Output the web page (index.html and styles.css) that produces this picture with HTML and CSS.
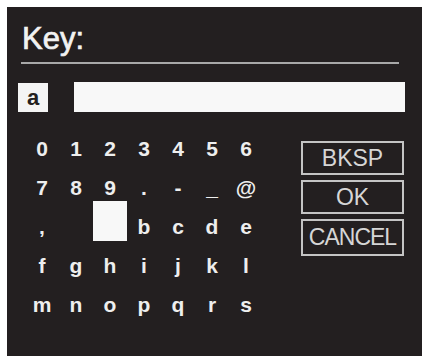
FILE: index.html
```html
<!DOCTYPE html>
<html>
<head>
<meta charset="utf-8">
<link rel="stylesheet" href="styles.css">
</head>
<body>
<div class="panel">
  <div class="title">Key:</div>
  <div class="rule"></div>
  <div class="entry">
    <div class="current">a</div>
    <div class="field"></div>
  </div>
  <div class="keyboard">
    <div class="keys">
      <span>0</span><span>1</span><span>2</span><span>3</span><span>4</span><span>5</span><span>6</span>
      <span>7</span><span>8</span><span>9</span><span>.</span><span>-</span><span>_</span><span>@</span>
      <span>,</span><span></span><span class="sel"></span><span>b</span><span>c</span><span>d</span><span>e</span>
      <span>f</span><span>g</span><span>h</span><span>i</span><span>j</span><span>k</span><span>l</span>
      <span>m</span><span>n</span><span>o</span><span>p</span><span>q</span><span>r</span><span>s</span>
    </div>
    <div class="buttons">
      <div class="btn">BKSP</div>
      <div class="btn">OK</div>
      <div class="btn cancel">CANCEL</div>
    </div>
  </div>
</div>
</body>
</html>
```
FILE: styles.css
```css
html, body {
  margin: 0;
  padding: 0;
  background: #ffffff;
  width: 426px;
  height: 356px;
  overflow: hidden;
}
.panel {
  margin: 7px 0 0 7px;
  width: 415px;
  height: 349px;
  background: #231f20;
  font-family: "Liberation Sans", Arial, sans-serif;
  box-sizing: border-box;
  padding-top: 14px;
}
.title {
  margin-left: 15px;
  font-size: 31px;
  line-height: 36px;
  height: 36px;
  color: #f2f2f2;
  -webkit-text-stroke: 0.7px #f2f2f2;
}
.rule {
  margin: 5px 0 0 14px;
  width: 378px;
  height: 2px;
  background: #a8a8a8;
}
.entry {
  display: flex;
  align-items: flex-start;
  margin: 18px 0 0 11px;
}
.current {
  margin-top: 1px;
  width: 30px;
  height: 29px;
  background: #f4f4f4;
  color: #231f20;
  font-weight: bold;
  font-size: 22px;
  line-height: 29px;
  text-align: center;
}
.field {
  margin-left: 26px;
  width: 331px;
  height: 30px;
  background: #f8f8f8;
}
.keyboard {
  display: flex;
  align-items: flex-start;
  margin: 14px 0 0 18px;
}
.keys {
  display: grid;
  grid-template-columns: repeat(7, 34px);
  grid-auto-rows: 39px;
  font-size: 21px;
  font-weight: bold;
  color: #eeeeee;
}
.keys span {
  display: block;
  height: 39px;
  line-height: 45px;
  text-align: center;
  overflow: visible;
}
.keys .sel {
  height: 40px;
  margin-top: -3px;
  background: #f8f8f8;
}
.buttons {
  display: flex;
  flex-direction: column;
  gap: 5px;
  margin: 15px 0 0 38px;
}
.btn {
  width: 103px;
  height: 34px;
  box-sizing: border-box;
  border: 2px solid #c4c4c4;
  color: #d6d6d6;
  font-size: 23px;
  line-height: 30px;
  text-align: center;
}
.cancel {
  height: 37px;
  line-height: 33px;
  letter-spacing: -1px;
}
```
